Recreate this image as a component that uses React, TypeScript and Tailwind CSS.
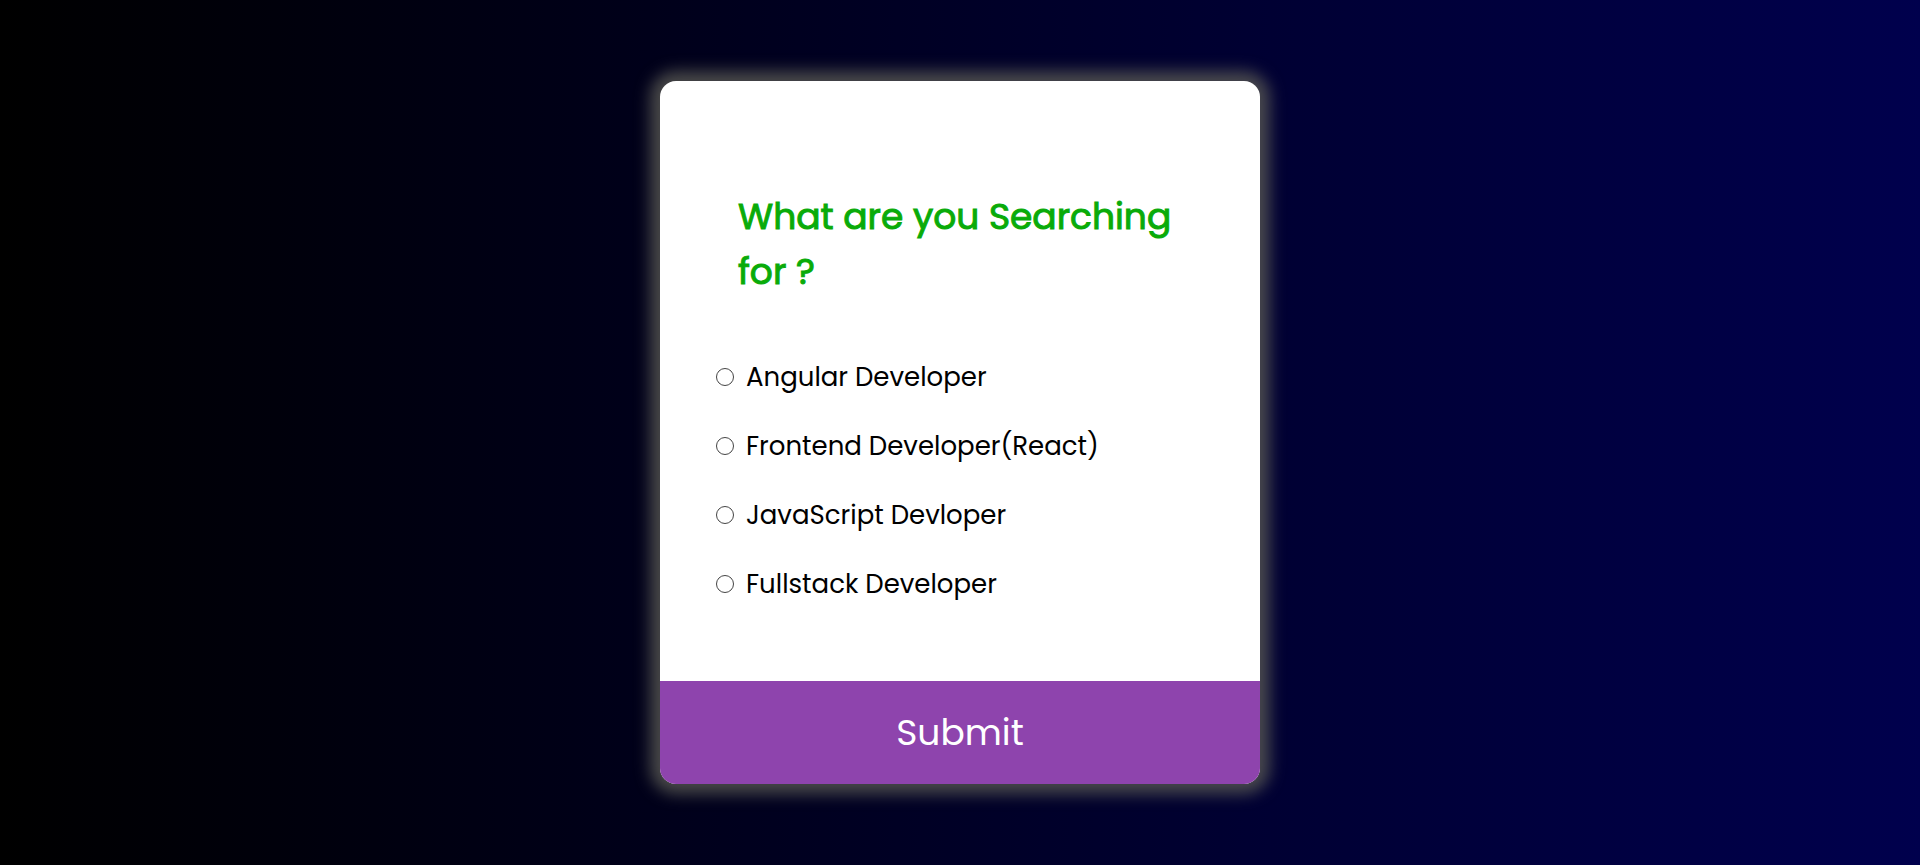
const options = [
  "Angular Developer",
  "Frontend Developer(React)",
  "JavaScript Devloper",
  "Fullstack Developer",
];

export default function App() {
  return (
    <main className="flex min-h-screen items-center justify-center bg-linear-to-r/srgb from-black to-[#00004d] font-['Poppins','Open_Sans',sans-serif]">
      <form
        className="w-full max-w-[600px] overflow-hidden rounded-2xl bg-white text-black shadow-[0_0_15px_10px_rgba(90,90,84,0.8)]"
        onSubmit={(e) => e.preventDefault()}
      >
        <div className="px-14 pt-[108px] pb-[77px]">
          <h2
            id="question"
            className="mb-[58px] px-[22px] text-[36px] leading-[55px] font-normal text-[#09ab09] [-webkit-text-stroke:1px_#09ab09]"
          >
            What are you Searching for ?
          </h2>
          <ul role="radiogroup" aria-labelledby="question" className="flex flex-col gap-[29px]">
            {options.map((option) => (
              <li key={option}>
                <label className="flex items-center gap-3 text-[26px] leading-10">
                  <input
                    type="radio"
                    name="role"
                    value={option}
                    className="size-[18px] appearance-none rounded-full border border-[#444444] checked:border-[5px] checked:border-[#0075ff]"
                  />
                  {option}
                </label>
              </li>
            ))}
          </ul>
        </div>
        <button type="submit" className="block w-full bg-[#8e44ad] py-6 text-[36px] leading-[55px] text-white">
          Submit
        </button>
      </form>
    </main>
  );
}
